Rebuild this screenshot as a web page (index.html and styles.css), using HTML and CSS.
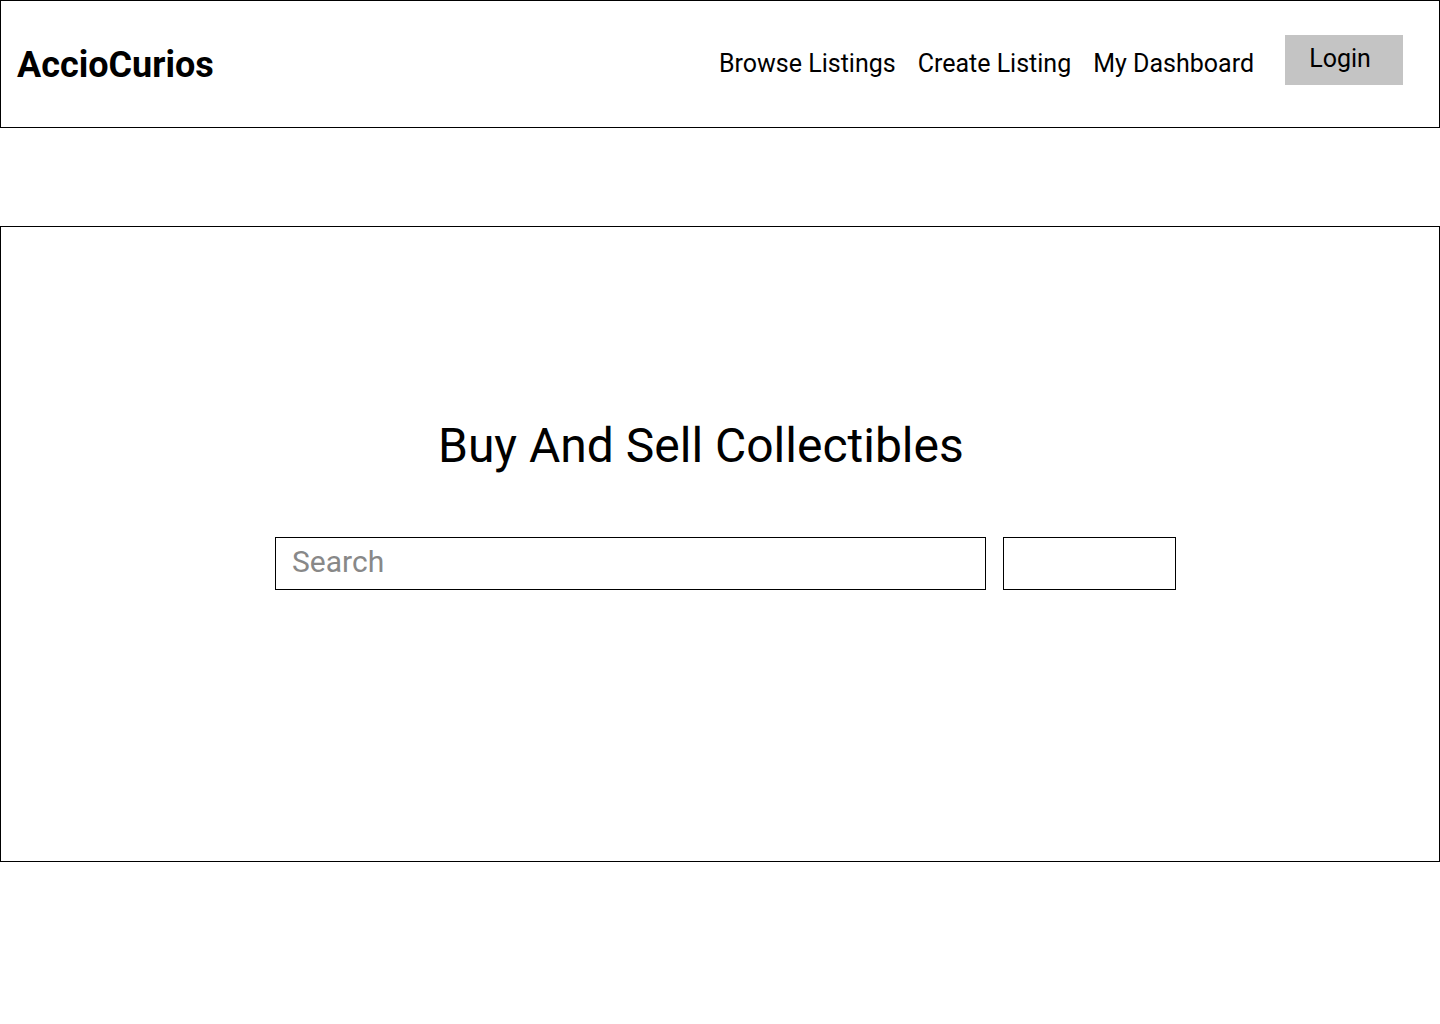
FILE: index.html
```html
<!DOCTYPE html>
<html lang="en">
<head>
<meta charset="utf-8">
<title>AccioCurios</title>
<link rel="stylesheet" href="styles.css">
</head>
<body>
<header class="site-header">
  <div class="logo">AccioCurios</div>
  <nav class="nav">
    <a class="nav-link" href="#">Browse Listings</a>
    <a class="nav-link" href="#">Create Listing</a>
    <a class="nav-link" href="#">My Dashboard</a>
  </nav>
  <button class="login-btn">Login</button>
</header>
<section class="hero">
  <h1 class="hero-title">Buy And Sell Collectibles</h1>
  <form class="search-row">
    <input class="search-input" type="text" placeholder="Search">
    <button class="search-btn" type="button"></button>
  </form>
</section>
</body>
</html>
```
FILE: styles.css
```css
* { box-sizing: border-box; }
html, body { margin: 0; padding: 0; background: #fff; }
body { font-family: Roboto, "Noto Sans", Arial, sans-serif; color: #000; }

.site-header {
  height: 128px;
  border: 1px solid #000;
  display: flex;
  align-items: center;
  padding: 0 36px 0 16px;
}
.logo {
  font-size: 36px;
  font-weight: 700;
  margin-top: 2px;
  flex: 1;
}
.nav {
  display: flex;
  gap: 22px;
  margin-top: -2px;
}
.nav-link {
  font-size: 25px;
  color: #000;
  text-decoration: none;
}
.login-btn {
  margin-left: 31px;
  width: 118px;
  height: 50px;
  margin-top: -8px;
  background: #c4c4c4;
  border: none;
  font-family: inherit;
  font-size: 25px;
  color: #000;
  padding: 0 8px 4px 0;
}

.hero {
  margin-top: 98px;
  height: 636px;
  border: 1px solid #000;
  display: flex;
  flex-direction: column;
  align-items: flex-start;
  padding-top: 186px;
}
.hero-title {
  margin: 0 0 0 437px;
  font-size: 48px;
  font-weight: 400;
  line-height: 66px;
}
.search-row {
  display: flex;
  gap: 17px;
  margin: 58px 0 0 274px;
}
.search-input {
  width: 711px;
  height: 53px;
  border: 1px solid #000;
  padding: 0 16px 4px;
  font-family: inherit;
  font-size: 30px;
  color: #000;
  outline: none;
}
.search-input::placeholder { color: #888; }
.search-btn {
  width: 173px;
  height: 53px;
  border: 1px solid #000;
  background: #fff;
}
```
